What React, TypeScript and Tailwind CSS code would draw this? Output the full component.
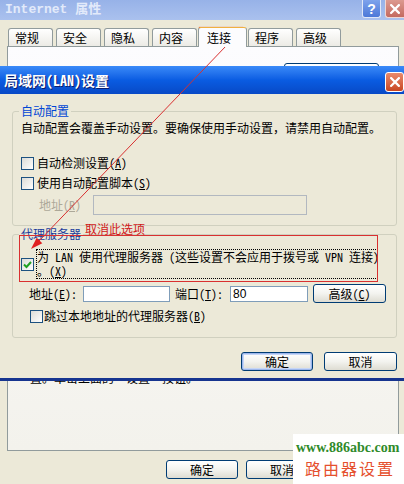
import React from "react";

function Check({ checked = false }: { checked?: boolean }) {
  return (
    <span className="flex w-[13px] h-[13px] shrink-0 items-center justify-center border border-[#1c5180] bg-gradient-to-br from-[#dcdcd7] to-white">
      {checked && (
        <svg width="11" height="11" viewBox="0 0 11 11">
          <path d="M2 5.5 L4.5 8 L9 3" fill="none" stroke="#21a121" strokeWidth="2" />
        </svg>
      )}
    </span>
  );
}

function XpButton({ children, className = "" }: { children: React.ReactNode; className?: string }) {
  return (
    <div
      className={
        "flex h-[19px] items-center justify-center rounded-[3px] border border-[#003c74] bg-gradient-to-b from-white via-[#f3f3ef] to-[#dedcd2] text-[12px] leading-[14px] " +
        className
      }
    >
      {children}
    </div>
  );
}

function CloseX({ size = 9 }: { size?: number }) {
  return (
    <svg width={size} height={size} viewBox="0 0 9 9">
      <path d="M1 1 L8 8 M8 1 L1 8" stroke="white" strokeWidth="2" strokeLinecap="square" />
    </svg>
  );
}

export default function App() {
  return (
    <div className="relative w-[404px] h-[484px] overflow-hidden bg-[#ece9d8] font-['Noto_Sans_Mono_CJK_SC','Noto_Sans_CJK_SC',sans-serif] text-[12px] leading-[14px] text-black">
      {/* Outer window title bar (inactive) */}
      <div className="flex h-[20px] items-start justify-between bg-gradient-to-b from-[#97b2e8] to-[#aac1ee]">
        <span className="pl-[5px] pt-[2px] font-['Liberation_Mono','Noto_Sans_CJK_SC',monospace] text-[13px] font-bold leading-[16px] text-[#e2eafa]">
          Internet 属性
        </span>
        <div className="flex gap-[4px]">
          <div className="flex h-[18px] w-[19px] items-center justify-center rounded-b-[3px] border border-t-0 border-[#dfe7f8] bg-gradient-to-b from-[#7ea3ec] to-[#4c78d8] font-['Liberation_Sans',sans-serif] text-[14px] font-bold leading-[14px] text-white">
            ?
          </div>
          <div className="flex h-[18px] w-[19px] items-center justify-center rounded-bl-[3px] border border-t-0 border-r-0 border-[#efd6d2] bg-gradient-to-b from-[#dc9a90] to-[#c46a60]">
            <CloseX size={10} />
          </div>
        </div>
      </div>

      {/* Tabs */}
      <div className="relative z-10 mt-[1px] flex h-[26px] items-end gap-[3px] pl-[8px]">
        {["常规", "安全", "隐私", "内容"].map((t) => (
          <div
            key={t}
            className="mb-[1px] h-[18px] w-[45px] rounded-t-[3px] border border-b-0 border-[#919b9c] bg-gradient-to-b from-white to-[#ecebe5] pl-[6px] pt-[2px]"
          >
            {t}
          </div>
        ))}
        <div className="-mx-[2px] h-[20px] w-[49px] rounded-t-[3px] border border-b-0 border-[#919b9c] border-t-[#f0b040] bg-[#fcfcfe] pl-[8px] pt-[3px]">
          连接
        </div>
        {["程序", "高级"].map((t) => (
          <div
            key={t}
            className="mb-[1px] h-[18px] w-[45px] rounded-t-[3px] border border-b-0 border-[#919b9c] bg-gradient-to-b from-white to-[#ecebe5] pl-[6px] pt-[2px]"
          >
            {t}
          </div>
        ))}
      </div>

      {/* Tab panel */}
      <div className="-mt-[1px] ml-[7px] flex h-[405px] w-[392px] flex-col border border-[#919b9c] bg-gradient-to-b from-[#fcfcfe] to-[#f3f2ec]">
        <div className="ml-[276px] mt-[16px] h-[30px] w-[95px] rounded-[3px] border border-[#003c74] bg-white" />
        <div className="ml-[22px] mt-[278px] whitespace-nowrap">置。单击上面的“设置”按钮。</div>
      </div>

      {/* Outer buttons */}
      <div className="mt-[9px] flex gap-[8px] pl-[166px]">
        <XpButton className="w-[72px]">确定</XpButton>
        <XpButton className="w-[72px]">取消</XpButton>
      </div>

      {/* Watermark */}
      <div className="absolute bottom-0 right-0 flex h-[50px] w-[111px] flex-col bg-white">
        <div className="pl-[3px] pt-[6px] font-['Liberation_Serif',serif] text-[14px] font-bold leading-[16px] text-[#2f8a2a]">
          www.886abc.com
        </div>
        <div className="mt-[2px] pl-[12px] text-[16px] leading-[20px] tracking-[2px] text-[#e5502e]">路由器设置</div>
      </div>

      {/* LAN settings dialog */}
      <div className="absolute left-0 top-[66px] flex h-[315px] w-[409px] flex-col border-b-[3px] border-[#16348f] bg-[#ece9d8]">
        <div className="flex h-[28px] shrink-0 items-start justify-between bg-gradient-to-b from-[#3a8af8] via-[#0a5ce2] to-[#0849c6]">
          <span className="pl-[4px] pt-[6px] text-[14px] font-bold leading-[16px] text-white [text-shadow:1px_1px_0_#0a1e6e]">
            局域网(LAN)设置
          </span>
          <div className="mr-[5px] mt-[6px] flex h-[20px] w-[19px] items-center justify-center rounded-[3px] border border-white bg-gradient-to-b from-[#e98a6c] to-[#c8451f]">
            <CloseX size={10} />
          </div>
        </div>

        <div className="flex flex-1 flex-col px-[12px] pt-[10px]">
          {/* 自动配置 */}
          <fieldset className="rounded-[3px] border border-[#d0d0bf] px-[8px] pb-[10px]">
            <legend className="-ml-[2px] px-[2px] leading-[14px] text-[#0046d5]">自动配置</legend>
            <div className="mt-[3px] whitespace-nowrap">自动配置会覆盖手动设置。要确保使用手动设置，请禁用自动配置。</div>
            <div className="mt-[21px] flex items-center gap-[3px]">
              <Check />
              <span>
                自动检测设置(<u>A</u>)
              </span>
            </div>
            <div className="mt-[6px] flex items-center gap-[3px]">
              <Check />
              <span>
                使用自动配置脚本(<u>S</u>)
              </span>
            </div>
            <div className="mt-[5px] flex items-center">
              <span className="ml-[18px] w-[54px] text-[#aca899]">
                地址(<u>R</u>)
              </span>
              <div className="h-[20px] w-[214px] border border-[#b2b8c0] bg-[#ece9d8]" />
            </div>
          </fieldset>

          {/* 代理服务器 */}
          <fieldset className="mt-[1px] rounded-[3px] border border-[#d0d0bf] px-[8px] pb-[14px]">
            <legend className="-ml-[2px] px-[2px] leading-[14px] text-[#1a3c9c]">代理服务器</legend>
            <div className="mt-[8px] flex items-center gap-[2px]">
              <Check checked />
              <div className="flex w-[342px] flex-col border border-dotted border-black">
                <div className="h-[14px] whitespace-nowrap">为 LAN 使用代理服务器 (这些设置不会应用于拨号或 VPN 连接)</div>
                <div className="h-[14px] whitespace-nowrap">
                  。(<u>X</u>)
                </div>
              </div>
            </div>
            <div className="mt-[5px] flex items-center">
              <span className="ml-[8px] w-[54px]">
                地址(<u>E</u>):
              </span>
              <div className="h-[16px] w-[87px] border border-[#7f9db9] bg-white" />
              <span className="ml-[5px] w-[55px]">
                端口(<u>T</u>):
              </span>
              <div className="flex h-[16px] w-[78px] items-center border border-[#7f9db9] bg-white pl-[2px] font-['Liberation_Sans',sans-serif] text-[12px]">
                80
              </div>
              <XpButton className="ml-[5px] w-[73px]">
                高级(<u>C</u>)
              </XpButton>
            </div>
            <div className="mt-[6px] flex items-center gap-[1px] pl-[9px]">
              <Check />
              <span>
                跳过本地地址的代理服务器(<u>B</u>)
              </span>
            </div>
          </fieldset>

          <div className="mt-[14px] flex justify-end gap-[11px]">
            <XpButton className="w-[72px] shadow-[inset_0_0_0_1px_#9db7ec,inset_0_0_0_2px_#c6d6f6]">确定</XpButton>
            <XpButton className="w-[73px]">取消</XpButton>
          </div>
        </div>
      </div>

      {/* Red annotations */}
      <svg className="pointer-events-none absolute left-0 top-0" width="404" height="484" viewBox="0 0 404 484">
        <rect x="199.5" y="27.5" width="43" height="18" fill="none" stroke="#d93030" strokeWidth="1.2" />
        <rect x="19.5" y="235.5" width="358" height="46" fill="none" stroke="#d93030" strokeWidth="1" />
        <line x1="226" y1="46" x2="39" y2="241" stroke="#d93030" strokeWidth="1" />
        <polygon points="31,249 36.7,237.7 42.3,243.3" fill="#e02020" />
      </svg>
      <div className="pointer-events-none absolute left-[85px] top-[222px] text-[12px] leading-[14px] text-[#d01818]">
        取消此选项
      </div>
    </div>
  );
}
